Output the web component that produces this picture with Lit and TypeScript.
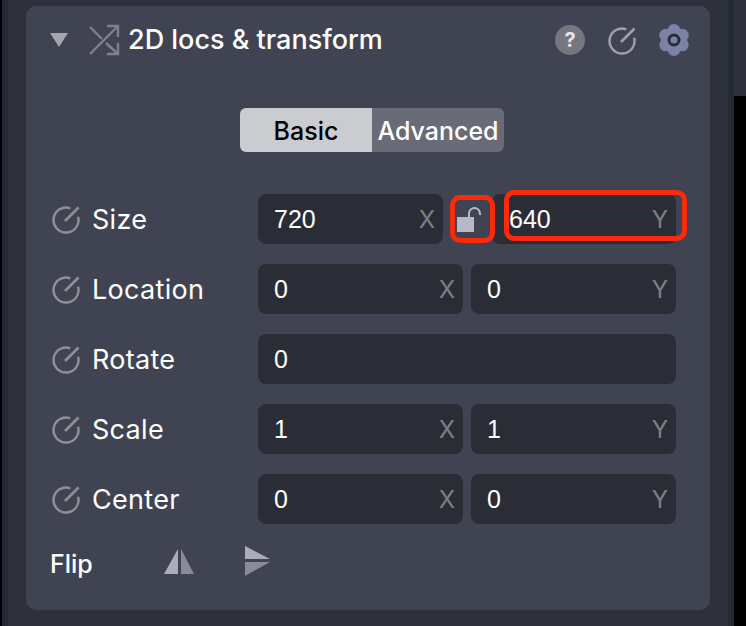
import { LitElement, html, css, svg } from 'lit';
import { customElement } from 'lit/decorators.js';

interface Row {
  label: string;
  x: string;
  y?: string;
}

const rows: Row[] = [
  { label: 'Location', x: '0', y: '0' },
  { label: 'Rotate', x: '0' },
  { label: 'Scale', x: '1', y: '1' },
  { label: 'Center', x: '0', y: '0' },
];

const dial = svg`<path d="M19.3 4.3 A12.5 12.5 0 1 0 27.1 12.8" fill="none" stroke="currentColor" stroke-width="2.4"/><path d="M14 17 L27.5 3.5" fill="none" stroke="currentColor" stroke-width="2.6"/>`;

@customElement('app-root')
export class AppRoot extends LitElement {
  static styles = css`
    :host {
      display: block;
      width: 746px;
      height: 626px;
      overflow: hidden;
      font-family: Inter, 'Liberation Sans', Arial, sans-serif;
      color: #fff;
      background: #2e313c;
    }

    .page {
      display: flex;
      height: 626px;
    }

    .edge-black {
      width: 2px;
      background: #000;
    }

    .edge-dark {
      width: 6px;
      background: #222a33;
    }

    .gutter-left {
      width: 18px;
    }

    .panel {
      position: relative;
      box-sizing: border-box;
      width: 684px;
      height: 604px;
      margin-top: 6px;
      padding: 18px 19px 0 24px;
      background: #404452;
      border-radius: 10px;
    }

    .gutter-right {
      width: 18px;
    }

    .edge-right {
      width: 6px;
      background: #222a33;
    }

    .far {
      display: flex;
      flex-direction: column;
      width: 12px;
    }

    .far-top {
      height: 96px;
    }

    .far-bottom {
      flex: 1;
      background: #000;
    }

    .header {
      display: flex;
      align-items: center;
      height: 32px;
    }

    .arrow {
      width: 0;
      height: 0;
      border-left: 9px solid transparent;
      border-right: 9px solid transparent;
      border-top: 14px solid #a4a5ae;
    }

    .shuffle {
      margin: 0 0 0 20px;
      width: 32px;
      height: 32px;
      color: #7f808b;
    }

    .title {
      margin: -2px 0 0 8px;
      font-size: 27px;
      font-weight: 500;
      flex: 1;
    }

    .tools {
      display: flex;
      align-items: center;
    }

    .help {
      width: 30px;
      height: 30px;
      border-radius: 50%;
      background: #757680;
      color: #e6e6e8;
      font-size: 20px;
      font-weight: 700;
      line-height: 30px;
      text-align: center;
    }

    .tool-dial {
      margin-left: 22px;
      width: 30px;
      height: 30px;
      color: #a0a1a8;
    }

    .gear {
      margin-left: 20px;
      width: 34px;
      height: 34px;
    }

    .toggle {
      display: flex;
      width: 264px;
      height: 44px;
      margin: 52px 0 0 190px;
      border-radius: 6px;
      overflow: hidden;
      font-size: 25px;
      font-weight: 500;
      line-height: 46px;
      text-align: center;
    }

    .toggle div {
      flex: 1;
    }

    .basic {
      background: #cbccd0;
      color: #000;
    }

    .advanced {
      background: #696b76;
    }

    .form {
      display: flex;
      flex-direction: column;
      gap: 20px;
      margin-top: 42px;
    }

    .row {
      display: flex;
      align-items: center;
      height: 50px;
    }

    .name {
      display: flex;
      align-items: center;
      width: 208px;
      flex: none;
      font-size: 27px;
      letter-spacing: 0.3px;
    }

    .name svg {
      width: 30px;
      height: 30px;
      margin: 0 11px 0 1px;
      color: #8f9097;
      flex: none;
    }

    .fields {
      display: flex;
      gap: 8px;
      width: 418px;
    }

    .field {
      display: flex;
      align-items: center;
      flex: 1;
      box-sizing: border-box;
      height: 50px;
      padding: 0 8px 0 16px;
      background: #2b2d36;
      border-radius: 8px;
      font-size: 24px;
    }

    .field .value {
      flex: 1;
      font-family: 'Liberation Sans', Arial, sans-serif;
      font-size: 25px;
    }

    .field .unit {
      color: #7d7f86;
    }

    .size-x {
      flex: none;
      width: 185px;
    }

    .size-y {
      flex: none;
      width: 184px;
      padding-left: 17px;
    }

    .lock {
      width: 41px;
      height: 50px;
      flex: none;
      margin: 0 -4px;
    }

    .flip {
      display: flex;
      align-items: center;
      height: 40px;
      margin-top: 20px;
      font-size: 25px;
      font-weight: 500;
    }

    .flip-label {
      width: 113px;
    }

    .flip svg {
      width: 32px;
      height: 36px;
      margin-right: 49px;
    }

    .mark {
      position: absolute;
      box-sizing: border-box;
      border: 5px solid #fa2a0c;
      border-radius: 10px;
    }

    .mark-lock {
      left: 424px;
      top: 189px;
      width: 45px;
      height: 48px;
    }

    .mark-y {
      left: 478px;
      top: 184px;
      width: 183px;
      height: 51px;
    }
  `;

  private renderRow(row: Row) {
    return html`
      <div class="row">
        <div class="name"><svg viewBox="0 0 30 30">${dial}</svg>${row.label}</div>
        <div class="fields">
          <div class="field"><span class="value">${row.x}</span>${row.y ? html`<span class="unit">X</span>` : ''}</div>
          ${row.y ? html`<div class="field"><span class="value">${row.y}</span><span class="unit">Y</span></div>` : ''}
        </div>
      </div>
    `;
  }

  render() {
    return html`
      <div class="page">
        <div class="edge-black"></div>
        <div class="edge-dark"></div>
        <div class="gutter-left"></div>
        <div class="panel">
          <div class="header">
            <div class="arrow"></div>
            <svg class="shuffle" viewBox="0 0 32 32" fill="none" stroke="currentColor" stroke-width="2.4">
              <path d="M2 3 L14 15 M18 19 L30 30 M30 19 V30 H19 M2 30 L30 2 M19 2 H30 V13"/>
            </svg>
            <div class="title">2D locs &amp; transform</div>
            <div class="tools">
              <div class="help">?</div>
              <svg class="tool-dial" viewBox="0 0 30 30">${dial}</svg>
              <svg class="gear" viewBox="0 0 34 34">
                <g fill="#7c82a6">
                  <circle cx="17" cy="17" r="12"/>
                  <circle cx="17" cy="7.5" r="6.5"/>
                  <circle cx="25.2" cy="12.2" r="6.5"/>
                  <circle cx="25.2" cy="21.8" r="6.5"/>
                  <circle cx="17" cy="26.5" r="6.5"/>
                  <circle cx="8.8" cy="21.8" r="6.5"/>
                  <circle cx="8.8" cy="12.2" r="6.5"/>
                </g>
                <circle cx="17" cy="17" r="5" fill="none" stroke="#2b2d36" stroke-width="3"/>
              </svg>
            </div>
          </div>

          <div class="toggle">
            <div class="basic">Basic</div>
            <div class="advanced">Advanced</div>
          </div>

          <div class="form">
            <div class="row">
              <div class="name"><svg viewBox="0 0 30 30">${dial}</svg>Size</div>
              <div class="fields">
                <div class="field size-x"><span class="value">720</span><span class="unit">X</span></div>
                <svg class="lock" viewBox="0 0 41 50">
                  <rect x="10" y="23" width="17" height="15" fill="#b8b8c6"/>
                  <path d="M22 23 V19.5 A5.5 5.5 0 0 1 33 19.5 V21" fill="none" stroke="#b8b8c6" stroke-width="2"/>
                </svg>
                <div class="field size-y"><span class="value">640</span><span class="unit">Y</span></div>
              </div>
            </div>
            ${rows.map(row => this.renderRow(row))}
          </div>

          <div class="flip">
            <div class="flip-label">Flip</div>
            <svg viewBox="0 0 32 36">
              <path fill="#acacbb" d="M15 3 V28 H1 Z"/>
              <path fill="#8a8b97" d="M18 3 V28 H31 Z"/>
            </svg>
            <svg viewBox="0 0 32 36">
              <path fill="#acacbb" d="M1 0 L26 13 H1 Z"/>
              <path fill="#8a8b97" d="M1 30 L26 16 H1 Z"/>
            </svg>
          </div>

          <div class="mark mark-lock"></div>
          <div class="mark mark-y"></div>
        </div>
        <div class="gutter-right"></div>
        <div class="edge-right"></div>
        <div class="far">
          <div class="far-top"></div>
          <div class="far-bottom"></div>
        </div>
      </div>
    `;
  }
}

declare global {
  interface HTMLElementTagNameMap {
    'app-root': AppRoot;
  }
}
